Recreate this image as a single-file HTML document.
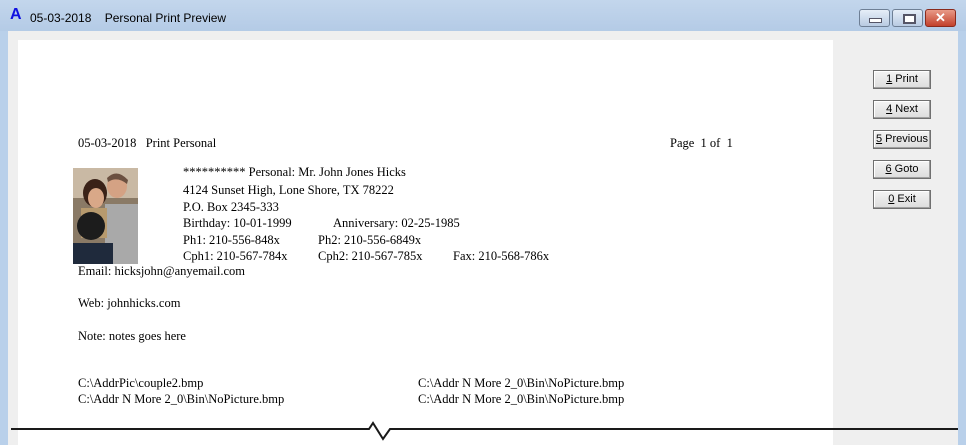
<!DOCTYPE html>
<html><head><style>
body{margin:0;width:966px;height:445px;overflow:hidden;position:relative;background:#f0f0f0;font-family:"Liberation Serif",serif;font-size:12.5px;color:#000}
.a{position:absolute;white-space:pre;line-height:16px}
.title{position:absolute;left:0;top:0;width:966px;height:31px;background:linear-gradient(#c3d6ec,#b4cbe6)}
.btn{position:absolute;left:873px;width:58px;height:19px;background:linear-gradient(#f4f4f4,#dcdcdc);border:1px solid #707070;box-sizing:border-box;font-family:"Liberation Sans",sans-serif;font-size:11px;text-align:center;line-height:17px;box-shadow:inset -1px -1px 0 #a0a0a0, inset 1px 1px 0 #fff}
.wb{position:absolute;top:9px;width:31px;height:18px;border:1px solid #6e7f95;border-radius:3px;box-sizing:border-box;background:linear-gradient(#e6eef8,#b9cbe2)}
</style></head><body>
<div class="title"></div>
<div style="position:absolute;left:0;top:31px;width:8px;height:414px;background:#b9d0ea"></div>
<div style="position:absolute;left:958px;top:31px;width:8px;height:414px;background:#b9d0ea"></div>
<div style="position:absolute;left:8px;top:31px;width:950px;height:414px;background:#efefef"></div>
<div class="a" style="left:10px;top:7px;font-family:'Liberation Sans',sans-serif;font-weight:bold;font-size:16px;color:#1010e0">A</div>
<div class="a" style="left:30px;top:10px;font-family:'Liberation Sans',sans-serif;font-size:12px">05-03-2018    Personal Print Preview</div>
<div class="wb" style="left:859px"><div style="position:absolute;left:9px;top:8px;width:11px;height:3px;background:#fff;border:1px solid #556"></div></div>
<div class="wb" style="left:892px"><div style="position:absolute;left:10px;top:4px;width:9px;height:6px;border:2px solid #556;background:#fff"></div></div>
<div class="wb" style="left:925px;background:linear-gradient(#e89a88,#c3412b);border-color:#8a2a1c;color:#fff;font:bold 13px 'Liberation Sans',sans-serif;text-align:center;line-height:16px">✕</div>
<div style="position:absolute;left:18px;top:40px;width:815px;height:405px;background:#fff"></div>
<div class="btn" style="top:70px"><u>1</u> Print</div>
<div class="btn" style="top:100px"><u>4</u> Next</div>
<div class="btn" style="top:130px"><u>5</u> Previous</div>
<div class="btn" style="top:160px"><u>6</u> Goto</div>
<div class="btn" style="top:190px"><u>0</u> Exit</div>
<div class="a" style="left:78px;top:135px">05-03-2018   Print Personal</div>
<div class="a" style="left:670px;top:135px">Page  1 of  1</div>
<svg style="position:absolute;left:73px;top:168px" width="65" height="96">
<rect width="65" height="96" fill="#8a7a66"/>
<rect x="0" y="0" width="65" height="30" fill="#c9b9a4"/>
<ellipse cx="22" cy="25" rx="12" ry="14" fill="#3a2218"/>
<ellipse cx="23" cy="30" rx="8" ry="10" fill="#d9a888"/>
<ellipse cx="44" cy="18" rx="10" ry="12" fill="#d4a284"/>
<path d="M34 10 Q44 0 55 12 L54 16 Q44 8 35 14Z" fill="#6b5040"/>
<rect x="32" y="36" width="33" height="60" fill="#a9a9a9"/>
<rect x="8" y="40" width="26" height="30" fill="#b79a6e"/>
<ellipse cx="18" cy="58" rx="14" ry="14" fill="#1c1c1c"/>
<rect x="0" y="75" width="40" height="21" fill="#1f2a3c"/>
</svg>
<div class="a" style="left:183px;top:164px">********** Personal: Mr. John Jones Hicks</div>
<div class="a" style="left:183px;top:182px">4124 Sunset High, Lone Shore, TX 78222</div>
<div class="a" style="left:183px;top:199px">P.O. Box 2345-333</div>
<div class="a" style="left:183px;top:215px">Birthday: 10-01-1999</div>
<div class="a" style="left:333px;top:215px">Anniversary: 02-25-1985</div>
<div class="a" style="left:183px;top:232px">Ph1: 210-556-848x</div>
<div class="a" style="left:318px;top:232px">Ph2: 210-556-6849x</div>
<div class="a" style="left:183px;top:248px">Cph1: 210-567-784x</div>
<div class="a" style="left:318px;top:248px">Cph2: 210-567-785x</div>
<div class="a" style="left:453px;top:248px">Fax: 210-568-786x</div>
<div class="a" style="left:78px;top:263px">Email: hicksjohn@anyemail.com</div>
<div class="a" style="left:78px;top:295px">Web: johnhicks.com</div>
<div class="a" style="left:78px;top:328px">Note: notes goes here</div>
<div class="a" style="left:78px;top:375px">C:\AddrPic\couple2.bmp</div>
<div class="a" style="left:78px;top:391px">C:\Addr N More 2_0\Bin\NoPicture.bmp</div>
<div class="a" style="left:418px;top:375px">C:\Addr N More 2_0\Bin\NoPicture.bmp</div>
<div class="a" style="left:418px;top:391px">C:\Addr N More 2_0\Bin\NoPicture.bmp</div>
<svg style="position:absolute;left:0;top:415px" width="966" height="30">
<polyline points="11,14 369,14 373,8 383,24 390,14 958,14" fill="none" stroke="#1a1a1a" stroke-width="2"/>
</svg>
</body></html>
